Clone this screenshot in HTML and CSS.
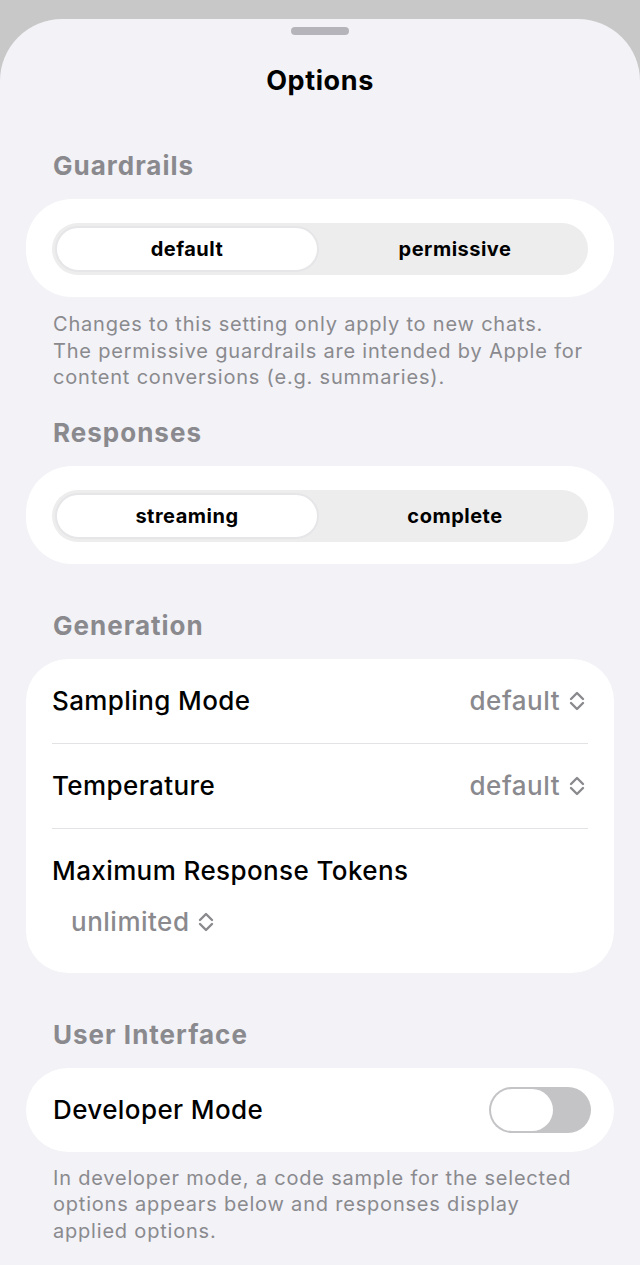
FILE: index.html
```html
<!DOCTYPE html>
<html lang="en">
<head>
    <meta charset="UTF-8">
    <meta name="viewport" content="width=device-width, initial-scale=1.0">
    <title>Options</title>
    <link rel="stylesheet" href="styles.css">
</head>
<body>
    <div class="sheet">
        <div class="grabber"></div>
        <h1 class="title">Options</h1>

        <h2 class="section-header">Guardrails</h2>
        <div class="card card-segment">
            <div class="segmented">
                <div class="segment selected">default</div>
                <div class="segment">permissive</div>
            </div>
        </div>
        <p class="footnote">Changes to this setting only apply to new chats.<br>The permissive guardrails are intended by Apple for<br>content conversions (e.g. summaries).</p>

        <h2 class="section-header">Responses</h2>
        <div class="card card-segment">
            <div class="segmented">
                <div class="segment selected">streaming</div>
                <div class="segment">complete</div>
            </div>
        </div>

        <h2 class="section-header section-spaced">Generation</h2>
        <div class="card card-list">
            <div class="row">
                <span class="row-label">Sampling Mode</span>
                <span class="picker">default
                    <svg class="chevrons" viewBox="0 0 18 22"><path d="M3 9 L9 3 L15 9 M3 13 L9 19 L15 13"/></svg>
                </span>
            </div>
            <div class="row">
                <span class="row-label">Temperature</span>
                <span class="picker">default
                    <svg class="chevrons" viewBox="0 0 18 22"><path d="M3 9 L9 3 L15 9 M3 13 L9 19 L15 13"/></svg>
                </span>
            </div>
            <div class="row row-stacked">
                <span class="row-label">Maximum Response Tokens</span>
                <span class="picker picker-inline">unlimited
                    <svg class="chevrons" viewBox="0 0 18 22"><path d="M3 9 L9 3 L15 9 M3 13 L9 19 L15 13"/></svg>
                </span>
            </div>
        </div>

        <h2 class="section-header section-spaced">User Interface</h2>
        <div class="card card-toggle">
            <span class="row-label">Developer Mode</span>
            <div class="toggle"><div class="knob"></div></div>
        </div>
        <p class="footnote">In developer mode, a code sample for the selected<br>options appears below and responses display<br>applied options.</p>
    </div>
</body>
</html>
```

FILE: styles.css
```css
body {
    margin: 0;
    padding: 0;
    background: #c8c8c8;
    font-family: Inter, "Noto Sans", sans-serif;
    color: #000;
}
.sheet {
    margin-top: 19px;
    background: #f2f2f7;
    border-radius: 62px 62px 0 0;
    padding: 8px 26px 40px;
    min-height: 1200px;
}
.grabber {
    width: 58px;
    height: 8px;
    border-radius: 4px;
    background: #b4b4ba;
    margin: 0 auto;
}
.title {
    margin: 30px 0 0;
    text-align: center;
    font-size: 27px;
    line-height: 32px;
    font-weight: 700;
    letter-spacing: 0.6px;
}
.section-header {
    margin: 53px 0 0;
    padding-left: 27px;
    font-size: 26px;
    line-height: 32px;
    font-weight: 700;
    color: #8a8a8e;
    letter-spacing: 1px;
}
.footnote + .section-header {
    margin-top: 26px;
}
.section-spaced {
    margin-top: 46px;
}
.footnote + .section-spaced {
    margin-top: 26px;
}
.card {
    margin-top: 17px;
    background: #fff;
}
.card-segment {
    border-radius: 46px;
    padding: 24px 26px 22px;
}
.segmented {
    display: flex;
    height: 52px;
    border-radius: 26px;
    background: #ededee;
    padding: 3px;
    box-sizing: border-box;
}
.segment {
    flex: 1;
    display: flex;
    align-items: center;
    justify-content: center;
    font-size: 20px;
    font-weight: 700;
    letter-spacing: 0.5px;
    border-radius: 23px;
}
.segment.selected {
    background: #fff;
    border: 2px solid #e6e6e8;
    margin-right: 6px;
}
.footnote {
    margin: 14px 0 0;
    padding: 0 0 0 27px;
    font-size: 20px;
    line-height: 26.5px;
    color: #8a8a8e;
    letter-spacing: 0.8px;
    white-space: nowrap;
}
.card-list {
    border-radius: 42px;
    padding: 0 26px;
}
.row {
    display: flex;
    justify-content: space-between;
    align-items: center;
    padding: 27px 0;
    border-bottom: 1px solid #e3e3e6;
}
.row:last-child {
    border-bottom: none;
}
.row-stacked {
    flex-direction: column;
    align-items: flex-start;
    padding: 27px 0 36px;
}
.row-label {
    font-size: 26px;
    line-height: 30px;
    font-weight: 500;
    letter-spacing: 0.4px;
}
.picker {
    display: flex;
    align-items: center;
    gap: 8px;
    font-size: 26px;
    line-height: 30px;
    font-weight: 500;
    color: #8a8a8e;
    letter-spacing: 0.5px;
    margin-right: 2px;
}
.picker-inline {
    margin-top: 21px;
    margin-left: 19px;
}
.chevrons {
    width: 18px;
    height: 22px;
    fill: none;
    stroke: #8a8a8e;
    stroke-width: 2.4;
    stroke-linecap: round;
    stroke-linejoin: round;
}
.card-toggle {
    border-radius: 42px;
    height: 84px;
    box-sizing: border-box;
    padding: 0 23px 0 27px;
    display: flex;
    align-items: center;
    justify-content: space-between;
}
.toggle {
    width: 102px;
    height: 46px;
    border-radius: 23px;
    background: #c4c4c7;
    padding: 2px;
    box-sizing: border-box;
}
.knob {
    width: 62px;
    height: 42px;
    border-radius: 21px;
    background: #fff;
}
.card-toggle + .footnote {
    margin-top: 13px;
}
```
